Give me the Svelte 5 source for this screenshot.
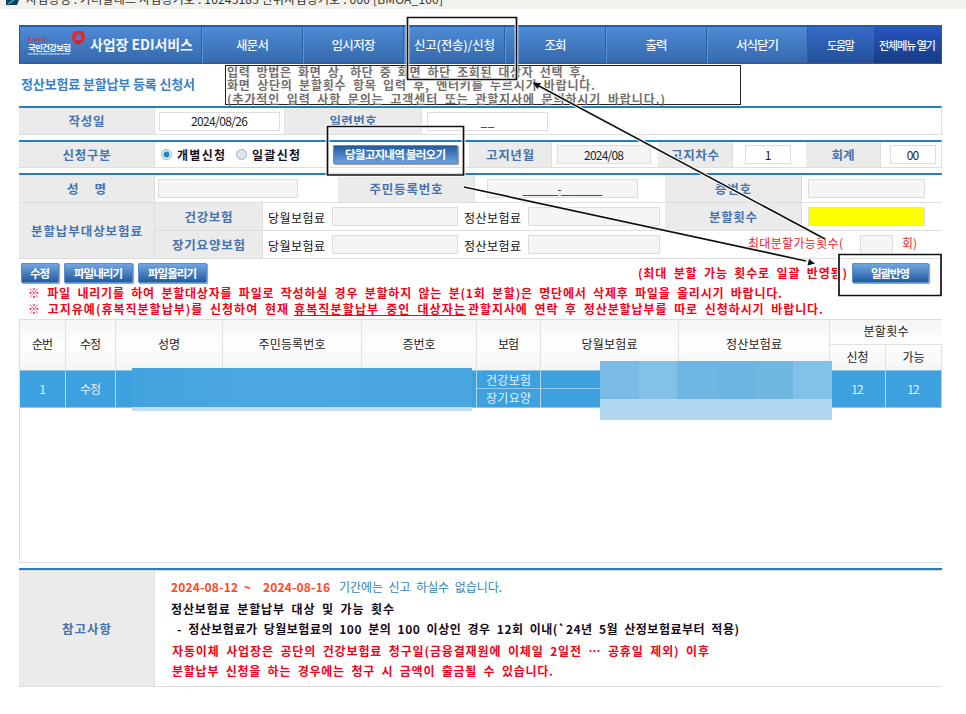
<script>
  // Spreads a label over a given width by adjusting its letter spacing.
  function fit(node, width) {
    const count = [...node.textContent].length;
    const range = document.createRange();
    range.selectNodeContents(node);
    const natural = range.getBoundingClientRect().width;
    const gap = (width - natural) / Math.max(1, count - 1);
    node.style.letterSpacing = `${gap}px`;
    node.style.marginRight = `${-gap}px`;
  }

  const menu = [
    { text: '새문서', w: 33 },
    { text: '임시저장', w: 44 },
    { text: '신고(전송)/신청', w: 81 },
    { text: '조회', w: 22 },
    { text: '출력', w: 22 },
    { text: '서식닫기', w: 43 },
    { text: '도움말', w: 28, kind: 'help' },
    { text: '전체메뉴 열기', w: 57, kind: 'all' }
  ];
  const heads = [
    ['순번', 21], ['수정', 21], ['성명', 22], ['주민등록번호', 67],
    ['증번호', 33], ['보험', 21], ['당월보험료', 56], ['정산보험료', 56]
  ];
</script>

<div class="page">
  <header class="caption">
    <svg width="13" height="5" viewBox="0 0 13 5"><path d="M0 0H13L11 5H0Z" fill="#123b5c" /><path d="M1 4 6 0H9L4 4Z" fill="#29a3bd" /></svg>
    <span use:fit={417}>사업장명 : 가려알테스 사업장기호 : 10245183 단위사업장기호 : 000 [BMOA_100]</span>
  </header>

  <nav>
    <div class="brand">
      <div class="logo">
        <i use:fit={18}>h-well</i>
        <b use:fit={43}>국민건강보험</b>
        <small use:fit={42}>National Health Insurance Service</small>
      </div>
      <svg class="mark" width="15" height="14" viewBox="0 0 15 14"><circle cx="7.5" cy="6" r="5" fill="none" stroke="#e5262b" stroke-width="3.4" /><path d="M4 10 7 14 11 10Z" fill="#c41f2c" /><path d="M7.5 5 5 3.5 4 5.5Z M7.5 5 10 3.5 11 5.5Z" fill="#e5262b" /></svg>
      <strong use:fit={103}>사업장 EDI서비스</strong>
    </div>
    {#each menu as item}
      <div class="item {item.kind ?? ''}"><span use:fit={item.w}>{item.text}</span></div>
    {/each}
  </nav>

  <section class="heading">
    <h1><span use:fit={174}>정산보험료 분할납부 등록 신청서</span></h1>
    <div class="tip">
      <p><span use:fit={358}>입력 방법은 화면 상, 하단 중 화면 하단 조회된 대상자 선택 후,</span></p>
      <p><span use:fit={368}>화면 상단의 분할횟수 항목 입력 후, 엔터키를 누르시기 바랍니다.</span></p>
      <p><span use:fit={438}>(추가적인 입력 사항 문의는 고객센터 또는 관할지사에 문의하시기 바랍니다.)</span></p>
    </div>
  </section>

  <section class="form one">
    <div class="label"><span use:fit={36}>작성일</span></div>
    <div class="cell"><div class="box white"><span use:fit={57}>2024/08/26</span></div></div>
    <div class="label"><span use:fit={47}>일련번호</span></div>
    <div class="cell serial"><div class="box white"><span>_&#8202;_</span></div></div>
  </section>

  <section class="form two">
    <div class="label"><span use:fit={48}>신청구분</span></div>
    <div class="cell choices">
      <span class="radio on"></span><b use:fit={48}>개별신청</b>
      <span class="radio second"></span><b use:fit={48}>일괄신청</b>
      <button class="load"><span use:fit={101}>당월고지내역 불러오기</span></button>
    </div>
    <div class="label"><span use:fit={48}>고지년월</span></div>
    <div class="cell"><div class="box"><span use:fit={40}>2024/08</span></div></div>
    <div class="label"><span use:fit={48}>고지차수</span></div>
    <div class="cell turn"><div class="box white"><span>1</span></div></div>
    <div class="label"><span use:fit={23}>회계</span></div>
    <div class="cell account"><div class="box white"><span use:fit={12.5}>00</span></div></div>
  </section>

  <section class="form three">
    <div class="label name"><span>성</span><span>명</span></div>
    <div class="cell c1"><div class="box"></div></div>
    <div class="label"><span use:fit={73}>주민등록번호</span></div>
    <div class="cell c2"><div class="box"><span class="blank" use:fit={80}>______-_______</span></div></div>
    <div class="label"><span use:fit={36}>증번호</span></div>
    <div class="cell c3"><div class="box"></div></div>
  </section>

  <section class="premium">
    <div class="label target"><span use:fit={111}>분할납부대상보험료</span></div>
    <div class="lines">
      {#each [['건강보험', 48], ['장기요양보험', 73]] as [kind, w], i}
        <div class="line">
          <div class="label"><span use:fit={w}>{kind}</span></div>
          <div class="amount">
            <span class="tag"><span use:fit={57}>당월보험료</span></span><div class="box b1"></div>
            <span class="tag"><span use:fit={57}>정산보험료</span></span><div class="box b2"></div>
          </div>
          {#if i === 0}
            <div class="label"><span use:fit={48}>분할횟수</span></div>
            <div class="cell c3"><div class="box yellow"></div></div>
          {:else}
            <div class="limit"><span use:fit={95}>최대분할가능횟수(</span><div class="box"></div><span use:fit={15}>회)</span></div>
          {/if}
        </div>
      {/each}
    </div>
  </section>

  <section class="actions">
    <button class="edit"><span use:fit={20}>수정</span></button>
    <button class="file"><span use:fit={49}>파일내리기</span></button>
    <button class="file"><span use:fit={49}>파일올리기</span></button>
    <b use:fit={209}>(최대 분할 가능 횟수로 일괄 반영됨)</b>
    <button class="apply"><span use:fit={39}>일괄반영</span></button>
  </section>
  <section class="warning">
    <p><b use:fit={754}>※ 파일 내리기를 하여 분할대상자를 파일로 작성하실 경우 분할하지 않는 분(1회 분할)은 명단에서 삭제후 파일을 올리시기 바랍니다.</b></p>
    <p class="split"><span><b use:fit={260}>※ 고지유예(휴복직분할납부)를 신청하여 현재</b></span><span class="under"><b use:fit={171}>휴복직분할납부 중인 대상자는</b></span><b use:fit={355}>관할지사에 연락 후 정산분할납부를 따로 신청하시기 바랍니다.</b></p>
  </section>

  <section class="table">
    <div class="row head">
      {#each heads as [text, w]}<div class="td"><span use:fit={w}>{text}</span></div>{/each}
      <div class="times">
        <div class="top"><span use:fit={45}>분할횟수</span></div>
        <div class="sub"><span use:fit={22}>신청</span></div>
        <div class="sub"><span use:fit={22}>가능</span></div>
      </div>
    </div>
    <div class="row body">
      <div class="td"><span>1</span></div>
      <div class="td"><span use:fit={21}>수정</span></div>
      <div class="td"></div><div class="td"></div><div class="td"></div>
      <div class="td pair"><span><i use:fit={45}>건강보험</i></span><span><i use:fit={45}>장기요양</i></span></div>
      <div class="td pair"><span></span><span></span></div>
      <div class="td"></div>
      <div class="td"><span use:fit={12.5}>12</span></div>
      <div class="td"><span use:fit={12.5}>12</span></div>
    </div>
    <div class="mask wide"></div>
    <div class="mask sums">
      {#each ['#79bbe5', '#83c1e8', '#70b6e2', '#6cb4e2', '#70b7e2', '#82c1e8'] as shade}<i style:background={shade}></i>{/each}
    </div>
  </section>

  <section class="notes">
    <div class="label"><span use:fit={49}>참고사항</span></div>
    <div class="text">
      <p class="date"><span class="range"><b use:fit={159}>2024-08-12 ~&nbsp; 2024-08-16</b></span><span use:fit={163}>기간에는 신고 하실수 없습니다.</span></p>
      <p><b use:fit={223}>정산보험료 분할납부 대상 및 가능 횟수</b></p>
      <p class="indent"><b use:fit={562}>- 정산보험료가 당월보험료의 100 분의 100 이상인 경우 12회 이내(`24년 5월 산정보험료부터 적용)</b></p>
      <p class="red first"><b use:fit={537}>자동이체 사업장은 공단의 건강보험료 청구일(금융결재원에 이체일 2일전 … 공휴일 제외) 이후</b></p>
      <p class="red"><b use:fit={381}>분할납부 신청을 하는 경우에는 청구 시 금액이 출금될 수 있습니다.</b></p>
    </div>
  </section>

  <svg class="callouts" width="966" height="714" viewBox="0 0 966 714">
    <g fill="none" stroke="#fff" stroke-width="3.6">
      <path d="M407.5 17.5H516.5V79.5H407.5Z M327.5 126.5H463.5V175H327.5Z M839 254.5H941V295.5H839Z M825 239 539 86 M464 187 806 261" />
    </g>
    <g fill="none" stroke="#111" stroke-width="1.7">
      <path d="M407.5 17.5H516.5V79.5H407.5Z M327.5 126.5H463.5V175H327.5Z M839 254.5H941V295.5H839Z M825 239 539 86 M464 187 806 261" />
    </g>
    <path d="M532.5 82.5 541 83 537.5 89Z M815 263.5 807.5 265.5 809 259Z" fill="#111" />
  </svg>
</div>

<style>
  :global(body) { margin: 0; background: #fff; }
  .page { position: relative; width: 966px; height: 714px; overflow: hidden; font: 12px/14px "Noto Sans CJK KR", "Noto Sans", sans-serif; color: #222; }
  .page * { box-sizing: border-box; }
  p, h1 { margin: 0; }
  span, b, strong, i { white-space: nowrap; flex: none; font-style: normal; }
  nav, .form, .premium, .actions, .warning, .table, .notes, .heading { margin-left: 19px; width: 923px; }

  .caption { height: 9px; background: #f2f2ed; display: flex; gap: 7px; padding-left: 6px; overflow: hidden; color: #333; }
  .caption svg { flex: none; }
  .caption span { height: 14px; margin-top: -8px; }

  nav { margin-top: 16px; height: 39px; display: flex; border: 1px solid #245ca8; border-top-width: 2px; background: linear-gradient(#4e8bd6, #3568ab); color: #f2f7ff; font-weight: 500; font-size: 12.5px; }
  .brand { width: 182px; display: flex; align-items: center; padding-left: 8px; border-right: 1px solid #2b61a4; }
  .logo { width: 43px; display: flex; flex-direction: column; align-items: flex-start; margin-top: 1px; }
  .logo i { font: italic bold 5.5px/6px "Open Sans", sans-serif; color: #d22c42; }
  .logo b { font-size: 8.5px; line-height: 10px; }
  .logo small { font-size: 2.5px; line-height: 4px; white-space: nowrap; }
  .mark { flex: none; margin: -14px 4px 0 0; }
  .brand strong { font-size: 14px; margin-top: -3px; }
  .item { flex: 0 0 101px; display: flex; align-items: center; justify-content: center; border-right: 1px solid #2b61a4; border-left: 1px solid #5794da; padding-bottom: 1px; }
  .help { flex-basis: 66px; font-size: 11px; background: linear-gradient(#376bc9, #24509a); border: 0; }
  .all { flex: 1; font-size: 11px; background: linear-gradient(#2955c2, #163c82); border: 0; }

  .heading { height: 42px; display: flex; }
  h1 { width: 206px; padding: 12px 0 0 2px; font-size: 13px; line-height: 16px; font-weight: 700; color: #3a7fc4; }
  .tip { width: 516px; height: 40px; margin-top: 1px; border: 1px solid #222; padding-left: 1px; font-size: 12px; font-weight: 700; color: #746e6c; word-spacing: 3px; }
  .tip p { height: 13.3px; line-height: 12px; }

  .form { display: grid; border-top: 2px solid #2180c1; margin-bottom: 4px; }
  .label { background: #ebebeb; display: flex; align-items: center; justify-content: center; color: #4672ae; font-weight: 700; border-right: 1px solid #dedede; font-size: 12.5px; }
  .cell { display: flex; align-items: center; padding-left: 4px; }
  .box { height: 19px; background: #f5f5f5; border: 1px solid #ddd; display: flex; align-items: center; justify-content: center; flex: none; width: 100%; }
  .white { background: #fff; }
  .yellow { background: #ff0; }
  .one { height: 29px; grid-template-columns: 136px 130px 137px 520px; border-bottom: 1px solid #dedede; border-right: 1px solid #dedede; margin-bottom: 5px; }
  .one .cell { padding-right: 4px; border-right: 1px solid #e4e4e4; }
  .one .serial { padding: 0 0 0 5px; border: 0; }
  .serial .box { width: 121px; }
  .two { height: 28px; grid-template-columns: 136px 314px 83px 106px 75px 73px 75px 61px; border-bottom: 1px solid #dedede; border-right: 1px solid #dedede; margin-bottom: 5px; }
  .two .cell { padding: 0 7px 0 5px; }
  .two .choices { padding: 0; color: #16101c; }
  .two .turn { padding: 0 15px 0 12px; }
  .two .account { padding: 0 6px 0 9px; }
  .radio { width: 11px; height: 11px; border-radius: 50%; border: 1px solid #a6aeb7; background: #dfe5eb; margin: 0 5px 0 6px; }
  .second { margin-left: 11px; }
  .on { background: radial-gradient(circle, #1686ce 0 2.5px, #e7f0f7 3.5px); }
  .choices .load { margin-left: auto; margin-right: 11px; }

  .three { height: 30px; margin-bottom: 0; grid-template-columns: 136px 183px 137px 190px 137px 140px; border-bottom: 1px solid #ddd; }
  .name { gap: 16px; }
  .c1 { padding-left: 3px; }
  .c1 .box { width: 140px; }
  .c2 { padding-left: 12px; }
  .c2 .box { width: 151px; }
  .c3 { padding-left: 6px; }
  .c3 .box { width: 117px; }
  .premium { height: 56px; display: flex; border-bottom: 1px solid #ddd; }
  .target { width: 136px; }
  .lines { flex: 1; }
  .line { height: 27px; display: grid; grid-template-columns: 108px 402px 137px 140px; }
  .line:first-child { height: 28px; border-bottom: 1px solid #ddd; }
  .amount { display: flex; align-items: center; padding-left: 5px; color: #111; }
  .tag { width: 57px; padding-top: 3px; }
  .b1 { width: 126px; margin: 0 6px 0 7px; }
  .b2 { width: 132px; margin-left: 7px; }
  .limit { grid-column: 3 / 5; display: flex; align-items: center; padding-left: 83px; color: #f3212c; }
  .limit span { padding-bottom: 3px; }
  .limit .box { width: 33px; margin: 0 9px 0 17px; }

  button { font: inherit; font-size: 11.5px; font-weight: 700; line-height: 14px; color: #fff; height: 20px; padding: 0 0 1px; border: 1px solid #5a8ecb; border-radius: 1px; background: linear-gradient(#71a6df, #225b9f); box-shadow: 1px 1px 1px #999; display: flex; align-items: center; justify-content: center; flex: none; }
  .load { width: 125px; height: 19px; background: linear-gradient(#225b9f, #69a0e0); }
  .actions { height: 25px; display: flex; padding: 4px 0 0 2px; color: #f80018; word-spacing: 3px; }
  .edit { width: 38px; margin-right: 5px; }
  .file { width: 69px; margin-right: 5px; }
  .actions b { margin-left: auto; padding-top: 3px; }
  .actions .apply { width: 77px; margin-left: 5px; margin-right: 13px; }
  .warning { color: #f80018; padding: 1px 0 0 9px; height: 35px; word-spacing: 3px; }
  .warning p { height: 16px; line-height: 16px; }
  .split { display: flex; }
  .split span:first-child { width: 266px; }
  .split .under { width: 174px; }
  .under b { text-decoration: underline; }

  .table { position: relative; height: 244px; border: 1px solid #ddd; border-right: 0; }
  .row { display: grid; grid-template-columns: 46px 50px 107px 139px 115px 64px 138px 151px 56px 56px; }
  .head { height: 50px; background: linear-gradient(#f4f4f4, #fff 50%, #f4f4f4); }
  .td { display: flex; align-items: center; justify-content: center; border-right: 1px solid #e1e1e1; padding-bottom: 2px; }
  .times { grid-column: 9 / 11; display: grid; grid-template-columns: 56px 56px; grid-template-rows: 25px 25px; }
  .times div { display: flex; align-items: center; justify-content: center; padding-bottom: 2px; }
  .times .top { grid-column: 1 / 3; border-bottom: 1px solid #e1e1e1; }
  .sub { border-right: 1px solid #e1e1e1; }
  .body { height: 38px; background: #3da0df; color: #e1f2ff; border-bottom: 1px solid #8bc5e9; border-top: 1px solid #8bc5e9; }
  .body .td { border-color: #b1d9f0; padding: 0; }
  .body .pair { flex-direction: column; }
  .pair span { width: 100%; height: 18px; display: flex; align-items: center; justify-content: center; }
  .pair span:first-child { border-bottom: 1px solid #91c9ec; }
  .mask { position: absolute; }
  .wide { left: 112px; top: 48px; width: 340px; height: 43px; background: linear-gradient(90deg, #43a3df, #4ba7e0 35%, #49a6df); border-bottom: 4px solid #c3e0f3; }
  .sums { left: 580px; top: 41px; width: 232px; height: 59px; border-bottom: 21px solid #b2d8f1; display: flex; }
  .sums i { flex: 1; }

  .notes { margin-top: 5px; height: 119px; border-top: 2px solid #2180c1; border-bottom: 1px solid #ddd; display: flex; }
  .notes .label { width: 136px; border-top: 1px solid #ddd; }
  .text { flex: 1; border-top: 1px solid #ddd; padding: 7px 0 0 16px; color: #160a18; word-spacing: 3px; }
  .text p { height: 20px; line-height: 18px; }
  .text .date { display: flex; color: #2d83bd; height: 22px; }
  .range { color: #ff4824; width: 168px; }
  .text .indent { padding-left: 6px; height: 22px; }
  .text .red { color: #f80018; padding-left: 1px; }
  .callouts { position: absolute; left: 0; top: 0; pointer-events: none; }
</style>
